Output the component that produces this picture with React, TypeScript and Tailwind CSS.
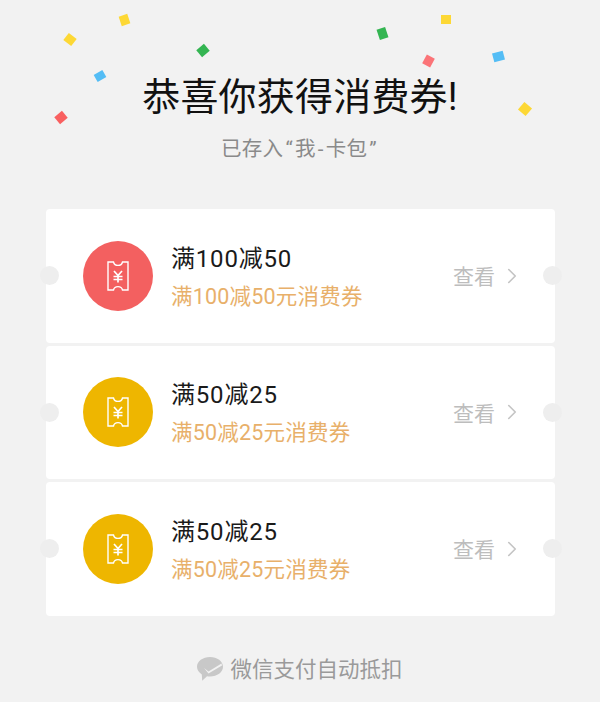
import React from 'react';
import { ChevronRight } from 'lucide-react';

const coupons = [
  { name: '满100减50', desc: '满100减50元消费券', red: true },
  { name: '满50减25', desc: '满50减25元消费券', red: false },
  { name: '满50减25', desc: '满50减25元消费券', red: false },
];

const TicketIcon: React.FC = () => (
  <svg width="22" height="30" viewBox="0 0 22 30" fill="none" stroke="white" strokeWidth="1.4">
    <path d="M1 1H6.5C7 3.2 8.8 4.4 11 4.4C13.2 4.4 15 3.2 15.5 1H21V29H15.5C15 26.8 13.2 25.6 11 25.6C8.8 25.6 7 26.8 6.5 29H1Z" />
    <path d="M7 10L11 14.5L15 10M11 14.5V21.5M6.5 15.5H15.5M6.5 18.5H15.5" strokeWidth="1.7" />
  </svg>
);

const WechatPayIcon: React.FC = () => (
  <svg width="26" height="24" viewBox="0 0 26 24">
    <path d="M13 0C5.8 0 0 4.4 0 9.8C0 12.9 1.9 15.6 4.8 17.4L5.2 23.8L10 19.3C11 19.5 12 19.6 13 19.6C20.2 19.6 26 15.2 26 9.8C26 4.4 20.2 0 13 0Z" fill="#c8c8c8" />
    <path d="M7 11L11.5 14.5L24.5 6.5L25 8.5L11.5 16.5Z" fill="#f2f2f2" />
  </svg>
);

const Confetti: React.FC<{ className: string }> = ({ className }) => (
  <div className={`absolute ${className}`} />
);

const App: React.FC = () => {
  return (
    <div
      className="relative h-[702px] w-[600px] overflow-hidden bg-[#f2f2f2]"
      style={{ fontFamily: 'Roboto, "Noto Sans CJK SC", sans-serif' }}
    >
      {/* falling paper bits */}
      <Confetti className="left-[65px] top-[35px] h-[9px] w-[10px] rotate-[38deg] bg-[#fdd835]" />
      <Confetti className="left-[120px] top-[15px] h-[10px] w-[9px] -rotate-[18deg] bg-[#fdd835]" />
      <Confetti className="left-[198px] top-[46px] h-[9px] w-[10px] -rotate-[40deg] bg-[#34b552]" />
      <Confetti className="left-[95px] top-[72px] h-[8px] w-[10px] -rotate-[30deg] bg-[#54bdf5]" />
      <Confetti className="left-[56px] top-[113px] h-[9px] w-[10px] -rotate-[40deg] bg-[#f96060]" />
      <Confetti className="left-[378px] top-[28px] h-[11px] w-[9px] -rotate-[18deg] bg-[#34b552]" />
      <Confetti className="left-[441px] top-[15px] h-[9px] w-[10px] bg-[#fdd835]" />
      <Confetti className="left-[424px] top-[56px] h-[10px] w-[9px] rotate-[28deg] bg-[#fb7478]" />
      <Confetti className="left-[493px] top-[52px] h-[9px] w-[11px] -rotate-[15deg] bg-[#54bdf5]" />
      <Confetti className="left-[520px] top-[104px] h-[10px] w-[10px] rotate-[40deg] bg-[#fdd835]" />

      <div className="flex flex-col items-center pt-[69px]">
        <h1 className="text-[38px] font-normal leading-[56px] tracking-[0.2px] text-[#111]">恭喜你获得消费券!</h1>
        <p className="mt-[9px] text-[20.5px] leading-[30px] tracking-[0.3px] text-[#8a8a8a]">
          已存入<span className="mx-[2px]">“</span>我<span className="mx-[2px]">-</span>卡包<span className="mx-[2px]">”</span>
        </p>
      </div>

      <div className="mx-[46px] mt-[45px] flex w-[509px] flex-col gap-[3px]">
        {coupons.map((c, i) => (
          <div key={i} className="relative flex h-[133.6px] items-center rounded-[4px] bg-white pl-[37px] pr-[36px]">
            <div className="absolute left-[-6px] top-[57px] h-[19px] w-[19px] rounded-full bg-[#eeeeee]" />
            <div className="absolute right-[-7px] top-[57px] h-[19px] w-[19px] rounded-full bg-[#eeeeee]" />
            <div
              className={`flex h-[70px] w-[70px] shrink-0 items-center justify-center rounded-full ${
                c.red ? 'bg-[#f36060]' : 'bg-[#eeb600]'
              }`}
            >
              <TicketIcon />
            </div>
            <div className="ml-[18px] flex-1 pt-[6px]">
              <div className="text-[24px] leading-[36px] tracking-[0.8px] text-[#1a1a1a]">{c.name}</div>
              <div className="text-[21.5px] leading-[40px] tracking-[0.2px] text-[#e8b06a]">{c.desc}</div>
            </div>
            <span className="pt-[4px] text-[21px] text-[#bdbdbd]">查看</span>
            <ChevronRight size={26} strokeWidth={1.5} className="ml-[4px] mr-[-6px] text-[#c4c4c4]" />
          </div>
        ))}
      </div>

      <div className="mt-[35px] flex items-center justify-center gap-[7px]">
        <WechatPayIcon />
        <span className="pt-[1px] text-[21.5px] leading-[36px] text-[#9a9a9a]">微信支付自动抵扣</span>
      </div>
    </div>
  );
};

export default App;
